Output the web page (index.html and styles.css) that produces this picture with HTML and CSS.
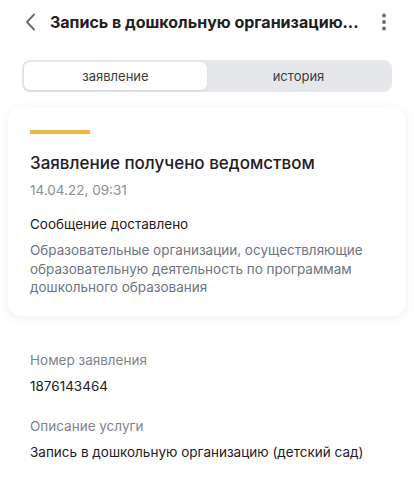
FILE: index.html
```html
<!DOCTYPE html>
<html lang="ru">
<head>
<meta charset="utf-8">
<link rel="stylesheet" href="styles.css">
</head>
<body>
<header class="topbar">
  <svg class="back" width="14" height="18" viewBox="0 0 14 18"><path d="M10 1.5 L3 9 L10 16.5" fill="none" stroke="#6b6f78" stroke-width="2" stroke-linecap="round" stroke-linejoin="round"/></svg>
  <h1 class="title">Запись в дошкольную организацию...</h1>
  <svg class="more" width="6" height="18" viewBox="0 0 6 18"><circle cx="3" cy="2.5" r="2" fill="#6b6f78"/><circle cx="3" cy="9" r="2" fill="#6b6f78"/><circle cx="3" cy="15.5" r="2" fill="#6b6f78"/></svg>
</header>
<div class="tabs">
  <div class="tab active">заявление</div>
  <div class="tab">история</div>
</div>
<section class="card">
  <div class="bar"></div>
  <h2 class="status">Заявление получено ведомством</h2>
  <div class="date">14.04.22, 09:31</div>
  <div class="msg">Сообщение доставлено</div>
  <p class="desc">Образовательные организации, осуществляющие образовательную деятельность по программам дошкольного образования</p>
</section>
<section class="info">
  <div class="label">Номер заявления</div>
  <div class="value">1876143464</div>
  <div class="label second">Описание услуги</div>
  <div class="value">Запись в дошкольную организацию (детский сад)</div>
</section>
</body>
</html>
```
FILE: styles.css
```css
* { box-sizing: border-box; }
body {
  margin: 0;
  background: #fff;
  font-family: Inter, "Noto Sans", sans-serif;
  color: #1f2023;
}
.topbar {
  display: flex;
  align-items: center;
  height: 43px;
  padding: 0 27px 0 24px;
}
.back { flex: none; }
.title {
  flex: 1;
  margin: 0 0 0 12px;
  font-size: 16px;
  font-weight: 700;
  color: #1f2023;
  white-space: nowrap;
}
.more { flex: none; }
.tabs {
  display: flex;
  margin: 17px 22px 0;
  padding: 2px;
  height: 32px;
  background: #e6e7eb;
  border-radius: 8px;
}
.tab {
  flex: 1;
  display: flex;
  align-items: center;
  justify-content: center;
  font-size: 13px;
  color: #3a3c41;
  border-radius: 6px;
}
.tab.active {
  background: #fff;
  box-shadow: 0 1px 2px rgba(0,0,0,0.08);
}
.card {
  margin: 15px 8px 0;
  padding: 23px 22px 19px;
  border-radius: 14px;
  background: #fff;
  box-shadow: 0 2px 12px rgba(20,30,60,0.07);
}
.bar {
  width: 60px;
  height: 4px;
  background: #eab94a;
}
.status {
  margin: 17px 0 0;
  font-size: 17px;
  font-weight: 500;
  line-height: 24px;
  color: #1f2023;
}
.date {
  margin-top: 5px;
  font-size: 13.5px;
  line-height: 20px;
  color: #8b8e96;
}
.msg {
  margin-top: 14px;
  font-size: 13.5px;
  line-height: 20px;
  color: #1f2023;
}
.desc {
  margin: 7px 0 0;
  font-size: 13.5px;
  line-height: 18.5px;
  color: #6f7481;
}
.info { padding: 34px 30px 0; }
.label {
  font-size: 13.5px;
  line-height: 20px;
  color: #80838c;
}
.label.second { margin-top: 20px; }
.value {
  margin-top: 6px;
  font-size: 13.5px;
  line-height: 20px;
  color: #1f2023;
}
```
